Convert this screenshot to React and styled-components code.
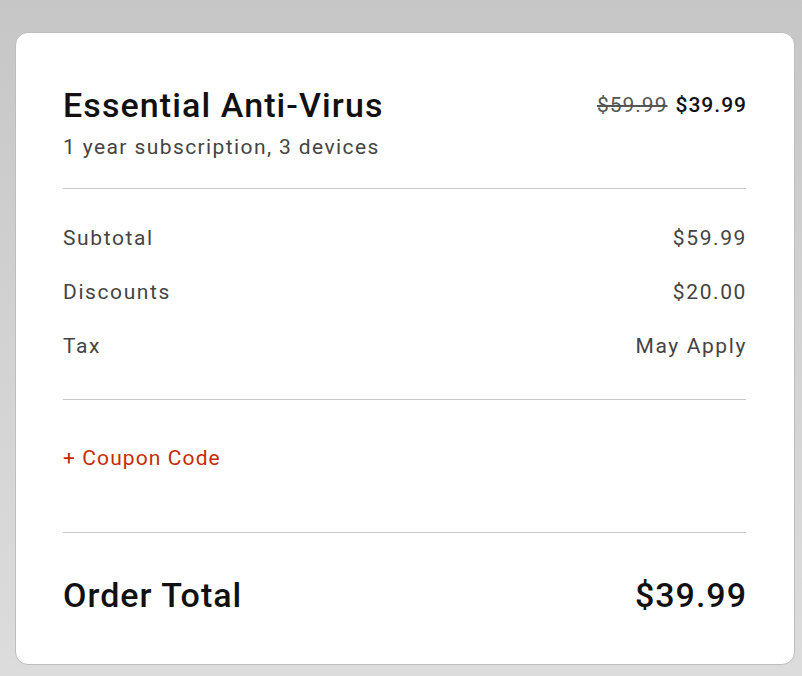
import React from "react";
import styled, { createGlobalStyle } from "styled-components";

const Global = createGlobalStyle`
  html, body { margin: 0; padding: 0; }
  body {
    min-height: 676px;
    background: linear-gradient(180deg, #c6c6c6 0%, #d2d2d2 50%, #dcdcdc 100%);
    font-family: Roboto, "Liberation Sans", sans-serif;
  }
`;

const Page = styled.div`
  padding: 32px 7px 11px 15px;
`;

const Card = styled.section`
  box-sizing: border-box;
  width: 780px;
  height: 633px;
  background: #fff;
  border: 1px solid #bdbdbd;
  border-radius: 13px;
  padding: 54px 47px 0 47px;
  display: flex;
  flex-direction: column;
`;

const Header = styled.div`
  display: flex;
  justify-content: space-between;
  align-items: flex-start;
`;

const Title = styled.h1`
  margin: 0;
  font-size: 34px;
  line-height: 36px;
  font-weight: 500;
  color: #111;
  letter-spacing: 1.1px;
`;

const Subtitle = styled.p`
  margin: 10px 0 0;
  font-size: 21px;
  line-height: 28px;
  color: #444;
  letter-spacing: 1.4px;
`;

const Prices = styled.div`
  display: flex;
  gap: 8px;
  font-size: 21px;
  line-height: 36px;
  letter-spacing: 1px;
`;

const OldPrice = styled.s`
  color: #555;
`;

const NewPrice = styled.span`
  color: #111;
  font-weight: 500;
`;

const Divider = styled.hr`
  margin: ${(p) => p.$top}px 1px 0 0;
  border: 0;
  height: 1px;
  background: #c8c8c8;
`;

const Rows = styled.div`
  display: flex;
  flex-direction: column;
  gap: 26px;
  margin-top: 35px;
`;

const Row = styled.div`
  display: flex;
  justify-content: space-between;
  font-size: 21px;
  line-height: 28px;
  color: #444;
  letter-spacing: 1.6px;
`;

const Coupon = styled.a`
  margin-top: 44px;
  font-size: 21px;
  line-height: 28px;
  color: #c62c02;
  letter-spacing: 1.1px;
  cursor: pointer;
`;

const Total = styled.div`
  display: flex;
  justify-content: space-between;
  margin-top: 42px;
  font-size: 34px;
  line-height: 40px;
  font-weight: 500;
  color: #111;
  letter-spacing: 1px;
`;

const lines = [
  ["Subtotal", "$59.99"],
  ["Discounts", "$20.00"],
  ["Tax", "May Apply"],
];

export default function App() {
  return (
    <>
      <Global />
      <Page>
        <Card>
          <Header>
            <div>
              <Title>Essential Anti-Virus</Title>
              <Subtitle>1 year subscription, 3 devices</Subtitle>
            </div>
            <Prices>
              <OldPrice>$59.99</OldPrice>
              <NewPrice>$39.99</NewPrice>
            </Prices>
          </Header>
          <Divider $top={27} />
          <Rows>
            {lines.map(([label, value]) => (
              <Row key={label}>
                <span>{label}</span>
                <span>{value}</span>
              </Row>
            ))}
          </Rows>
          <Divider $top={39} />
          <Coupon>+ Coupon Code</Coupon>
          <Divider $top={60} />
          <Total>
            <span>Order Total</span>
            <span>$39.99</span>
          </Total>
        </Card>
      </Page>
    </>
  );
}
